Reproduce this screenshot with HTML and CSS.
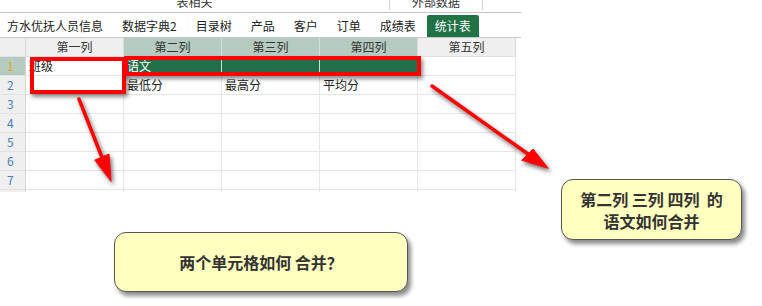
FILE: index.html
```html
<!DOCTYPE html>
<html lang="zh-CN">
<head>
  <meta charset="UTF-8">
  <title>统计表</title>
  <link rel="stylesheet" href="styles.css">
</head>
<body>
<div class="app">

  <!-- Ribbon group labels (cut off at the top) -->
  <div class="ribbon">
    <div class="group group-table"><span>表相关</span></div>
    <div class="group group-ext"><span>外部数据</span></div>
  </div>

  <!-- Sheet tabs -->
  <div class="tabs">
    <div class="tab first">方水优抚人员信息</div>
    <div class="tab">数据字典2</div>
    <div class="tab">目录树</div>
    <div class="tab">产品</div>
    <div class="tab">客户</div>
    <div class="tab">订单</div>
    <div class="tab">成绩表</div>
    <div class="tab active">统计表</div>
  </div>

  <!-- Grid -->
  <div class="sheet">
    <div class="corner"></div>
    <div class="colhead">第一列</div>
    <div class="colhead sel">第二列</div>
    <div class="colhead sel">第三列</div>
    <div class="colhead sel">第四列</div>
    <div class="colhead">第五列</div>

    <div class="rowhead sel">1</div>
    <div class="cell">班级</div>
    <div class="cell hl">语文</div>
    <div class="cell hl"></div>
    <div class="cell hl"></div>
    <div class="cell"></div>

    <div class="rowhead">2</div>
    <div class="cell"></div>
    <div class="cell">最低分</div>
    <div class="cell">最高分</div>
    <div class="cell">平均分</div>
    <div class="cell"></div>

    <div class="rowhead">3</div>
    <div class="cell"></div><div class="cell"></div><div class="cell"></div><div class="cell"></div><div class="cell"></div>
    <div class="rowhead">4</div>
    <div class="cell"></div><div class="cell"></div><div class="cell"></div><div class="cell"></div><div class="cell"></div>
    <div class="rowhead">5</div>
    <div class="cell"></div><div class="cell"></div><div class="cell"></div><div class="cell"></div><div class="cell"></div>
    <div class="rowhead">6</div>
    <div class="cell"></div><div class="cell"></div><div class="cell"></div><div class="cell"></div><div class="cell"></div>
    <div class="rowhead">7</div>
    <div class="cell"></div><div class="cell"></div><div class="cell"></div><div class="cell"></div><div class="cell"></div>

    <div class="rowhead stub"></div>
    <div class="cell stub"></div><div class="cell stub"></div><div class="cell stub"></div><div class="cell stub"></div><div class="cell stub"></div>
  </div>

  <!-- Annotations drawn over the sheet -->
  <div class="mark mark-class"></div>
  <div class="mark mark-lang"></div>

  <svg class="arrows" width="762" height="306" viewBox="0 0 762 306">
    <g fill="#ff0000" stroke="#ff0000" stroke-linecap="round">
      <line x1="79" y1="99" x2="103" y2="160" stroke-width="3.5"/>
      <polygon points="95,160 109,154 111,181" stroke-width="1"/>
      <line x1="432" y1="86" x2="528" y2="154" stroke-width="3.5"/>
      <polygon points="522,160 533,149 548,168" stroke-width="1"/>
    </g>
  </svg>

  <div class="note note-merge">第二列 三列 四列&nbsp; 的<br>语文如何合并</div>
  <div class="note note-cells">两个单元格如何 合并？</div>

</div>
</body>
</html>
```

FILE: styles.css
```css
body {
  margin: 0;
  background: #ffffff;
  font-family: "Noto Sans CJK SC", "Noto Sans", sans-serif;
  color: #222;
}

.app {
  position: relative;
  width: 762px;
  height: 306px;
  overflow: hidden;
}

/* Ribbon group labels */
.ribbon {
  display: flex;
  width: 521px;
  height: 12px;
  border-bottom: 1px solid #c6c6c6;
  overflow: hidden;
}

.group {
  display: flex;
  justify-content: center;
  height: 10px;
  border-right: 1px solid #d4d4d4;
  font-size: 12px;
  line-height: 12px;
  color: #333;
}

.group span {
  margin-top: -4px;
}

.group-table {
  width: 389px;
}

.group-ext {
  width: 92px;
}

/* Sheet tabs */
.tabs {
  display: flex;
  align-items: flex-end;
  gap: 3px;
  width: 521px;
  height: 24px;
  border-bottom: 1px solid #c6c6c6;
  font-size: 12px;
}

.tab {
  height: 22px;
  line-height: 22px;
  padding: 0 8px;
  color: #222;
  white-space: nowrap;
}

.tab.first {
  padding-left: 7px;
}

.tab.active {
  background: #217346;
  color: #ffffff;
  border-radius: 2px 2px 0 0;
}

/* Grid */
.sheet {
  display: grid;
  grid-template-columns: 26px repeat(5, 98px);
  grid-template-rows: 19px repeat(7, 19px) 2px;
  width: 517px;
  font-size: 12px;
}

.corner,
.colhead {
  background: #efefef;
  border-right: 1px solid #dadada;
  border-bottom: 1px solid #e2e2e2;
  box-sizing: border-box;
}

.colhead {
  text-align: center;
  line-height: 18px;
  color: #333;
}

.colhead.sel {
  background: #b5cbbf;
  border-right-color: #d2e0d8;
}

.rowhead {
  background: #efefef;
  border-right: 1px solid #d6d6d6;
  border-bottom: 1px solid #e2e2e2;
  box-sizing: border-box;
  padding-left: 7px;
  line-height: 18px;
  color: #4a7ebb;
}

.rowhead.sel {
  background: #b5cbbf;
  color: #f0a30a;
}

.cell {
  border-right: 1px solid #e6e6e6;
  border-bottom: 1px solid #e6e6e6;
  box-sizing: border-box;
  padding-left: 3px;
  line-height: 18px;
  color: #222;
  white-space: nowrap;
}

.cell.hl {
  background: #21704a;
  border-right-color: #cfe0d6;
  color: #ffffff;
}

.stub {
  border-bottom: none;
}

/* Red highlight boxes */
.mark {
  position: absolute;
  border: 4px solid #ff0000;
  box-sizing: border-box;
  box-shadow: 2px 3px 4px rgba(0, 0, 0, 0.45);
}

.mark-class {
  left: 30px;
  top: 57px;
  width: 96px;
  height: 37px;
}

.mark-lang {
  left: 124px;
  top: 56px;
  width: 297px;
  height: 20px;
}

.arrows {
  position: absolute;
  left: 0;
  top: 0;
  filter: drop-shadow(2px 3px 2px rgba(0, 0, 0, 0.55));
}

/* Yellow callouts */
.note {
  position: absolute;
  display: flex;
  align-items: center;
  justify-content: center;
  text-align: center;
  background: #ffffc0;
  border: 1px solid #555555;
  border-radius: 12px;
  box-sizing: border-box;
  box-shadow: 3px 4px 4px rgba(0, 0, 0, 0.45);
  font-size: 16px;
  font-weight: bold;
  line-height: 22px;
  color: #333333;
}

.note-merge {
  left: 561px;
  top: 179px;
  width: 181px;
  height: 61px;
}

.note-cells {
  left: 114px;
  top: 232px;
  width: 294px;
  height: 60px;
}
```
